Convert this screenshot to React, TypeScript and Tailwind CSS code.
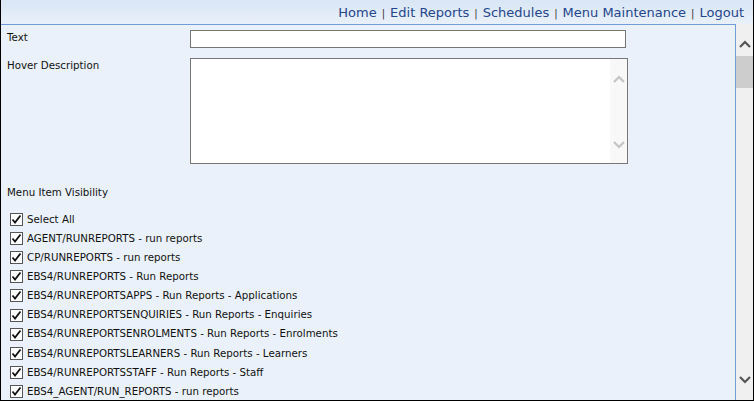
import React from "react";

const links = ["Home", "Edit Reports", "Schedules", "Menu Maintenance", "Logout"];

const items = [
  "Select All",
  "AGENT/RUNREPORTS - run reports",
  "CP/RUNREPORTS - run reports",
  "EBS4/RUNREPORTS - Run Reports",
  "EBS4/RUNREPORTSAPPS - Run Reports - Applications",
  "EBS4/RUNREPORTSENQUIRIES - Run Reports - Enquiries",
  "EBS4/RUNREPORTSENROLMENTS - Run Reports - Enrolments",
  "EBS4/RUNREPORTSLEARNERS - Run Reports - Learners",
  "EBS4/RUNREPORTSSTAFF - Run Reports - Staff",
  "EBS4_AGENT/RUN_REPORTS - run reports",
];

const Chevron = ({ up, color }: { up?: boolean; color: string }) => (
  <svg width="12" height="8" viewBox="0 0 12 8">
    <path
      d={up ? "M1 7 L6 2 L11 7" : "M1 1 L6 6 L11 1"}
      fill="none"
      stroke={color}
      strokeWidth="2.2"
    />
  </svg>
);

const Check = () => (
  <span className="w-[13px] h-[13px] shrink-0 border border-[#555] bg-white flex items-center justify-center">
    <svg width="11" height="11" viewBox="0 0 11 11">
      <path d="M1.5 5.5 L4 8.5 L9.5 1.5" fill="none" stroke="#111" strokeWidth="1.8" />
    </svg>
  </span>
);

const App = () => {
  return (
    <div
      className="w-[754px] h-[401px] border-x border-b border-black flex flex-col overflow-hidden text-[#111]"
      style={{ fontFamily: "'DejaVu Sans', Verdana, sans-serif" }}
    >
      <div className="h-[24px] shrink-0 bg-gradient-to-b from-[#d9e6f5] to-[#e9f0fa] flex items-center justify-end pr-[9px] pt-[2px] text-[13px] text-[#24468c]">
        {links.map((l, i) => (
          <React.Fragment key={l}>
            {i > 0 && <span className="mx-[5px] text-[10px] text-[#333]">|</span>}
            <span>{l}</span>
          </React.Fragment>
        ))}
      </div>
      <div className="flex flex-1 min-h-0">
        <div className="flex-1 border-t border-r border-[#6f9bd6] bg-[#eaf1fa] text-[10.25px] pt-[5px] overflow-hidden">
          <div className="flex items-start h-[28px]">
            <span className="w-[189px] pl-[6px]">Text</span>
            <div className="w-[436px] h-[18px] border border-[#777] bg-white" />
          </div>
          <div className="flex items-start h-[127px]">
            <span className="w-[189px] pl-[6px]">Hover Description</span>
            <div className="w-[438px] h-[106px] border border-[#777] bg-white flex justify-end">
              <div className="w-[17px] bg-[#f8f8f8] flex flex-col items-center justify-between pt-[16px] pb-[14px]">
                <Chevron up color="#c4c4c4" />
                <Chevron color="#c4c4c4" />
              </div>
            </div>
          </div>
          <div className="pl-[6px] h-[24px]">Menu Item Visibility</div>
          <div className="flex flex-col pl-[9px] mt-[1px]">
            {items.map((t) => (
              <div key={t} className="flex items-center h-[19.1px] gap-[4px]">
                <Check />
                <span>{t}</span>
              </div>
            ))}
          </div>
        </div>
        <div className="w-[17px] shrink-0 bg-[#f0f0f0] flex flex-col items-center pt-[16px]">
          <Chevron up color="#555" />
          <div className="w-[17px] h-[32px] bg-[#cdcdcd] mt-[8px]" />
          <div className="flex-1" />
          <div className="pb-[16px]">
            <Chevron color="#555" />
          </div>
        </div>
      </div>
    </div>
  );
};

export default App;
